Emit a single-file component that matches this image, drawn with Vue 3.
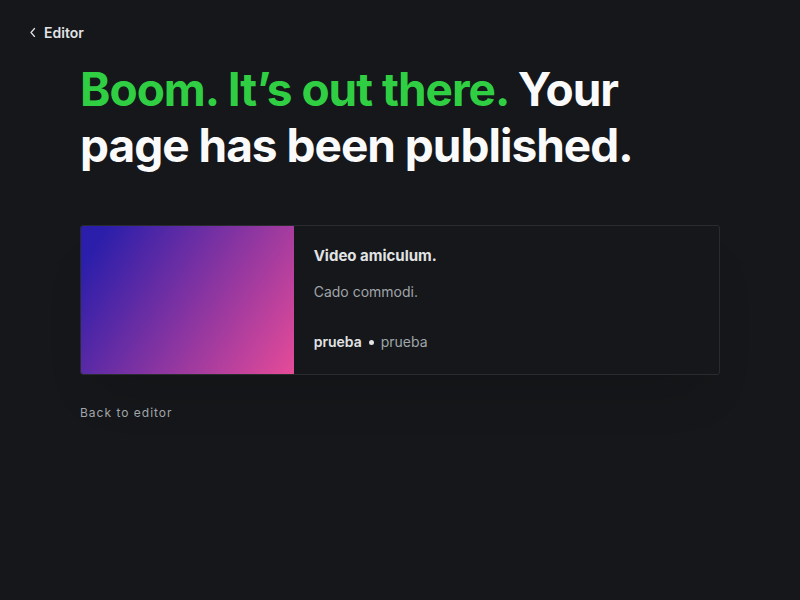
<script setup>
const post = {
  title: 'Video amiculum.',
  excerpt: 'Cado commodi.',
  author: 'prueba',
  site: 'prueba',
}
</script>

<template>
  <div class="modal">
    <header class="topbar">
      <button type="button" class="back">
        <svg class="chevron" viewBox="0 0 8 10" aria-hidden="true">
          <path d="M6.5 1.5 L3 5.5 L6.5 9.5" />
        </svg>
        <span>Editor</span>
      </button>
    </header>
    <main class="content">
      <h1 class="headline">
        <span class="accent">Boom. It’s out there.</span>
        Your page has been published.
      </h1>
      <a href="#" class="card">
        <div class="cover"></div>
        <div class="body">
          <h2 class="title">{{ post.title }}</h2>
          <p class="excerpt">{{ post.excerpt }}</p>
          <div class="meta">
            <span class="author">{{ post.author }}</span>
            <span class="dot"></span>
            <span class="site">{{ post.site }}</span>
          </div>
        </div>
      </a>
      <button type="button" class="return">Back to editor</button>
    </main>
  </div>
</template>

<style>
body {
  margin: 0;
  background: #15171a;
}
</style>

<style scoped>
.modal {
  box-sizing: border-box;
  min-height: 100vh;
  font-family: Inter, "Liberation Sans", sans-serif;
  background: #15171a;
  color: #fafafa;
}

.topbar {
  padding: 16px 28px 0;
}

button {
  padding: 0;
  border: 0;
  background: none;
  font-family: inherit;
  cursor: pointer;
}

.back {
  display: flex;
  align-items: center;
  gap: 8px;
  height: 32px;
  color: #e1e3e5;
  font-size: 14px;
  font-weight: 600;
}

.chevron {
  width: 8px;
  height: 10px;
  fill: none;
  stroke: currentColor;
  stroke-width: 1.2;
  stroke-linecap: round;
  stroke-linejoin: round;
}

.content {
  max-width: 640px;
  margin: 0 auto;
  padding: 13px 20px;
}

.headline {
  margin: 0 0 52px;
  font-size: 46px;
  font-weight: 700;
  line-height: 56px;
  letter-spacing: -1px;
}

.accent {
  color: #30cf43;
}

.card {
  display: grid;
  grid-template-columns: 1fr 2fr;
  border: 1px solid #292b2f;
  border-radius: 3px;
  overflow: hidden;
  color: #e1e3e5;
  text-decoration: none;
  box-shadow: 0 30px 50px -16px rgba(0, 0, 0, 0.14);
}

.cover {
  background: linear-gradient(123deg, #2a1eaa 8%, #ea4c98 102%);
}

.body {
  padding: 20px 20px 22px;
}

.title {
  margin: 0;
  font-size: 15px;
  font-weight: 700;
  line-height: 20px;
}

.excerpt {
  margin: 16px 0 30px;
  color: #a0a5aa;
  font-size: 14px;
  line-height: 20px;
}

.meta {
  display: flex;
  align-items: center;
  gap: 7px;
  font-size: 14px;
  line-height: 20px;
}

.author {
  font-weight: 600;
}

.dot {
  width: 5px;
  height: 5px;
  border-radius: 50%;
  background: #e1e3e5;
}

.site {
  color: #a0a5aa;
}

.return {
  display: block;
  margin-top: 28px;
  color: #a0a5aa;
  font-size: 12px;
  line-height: 20px;
  letter-spacing: 1px;
}
</style>
